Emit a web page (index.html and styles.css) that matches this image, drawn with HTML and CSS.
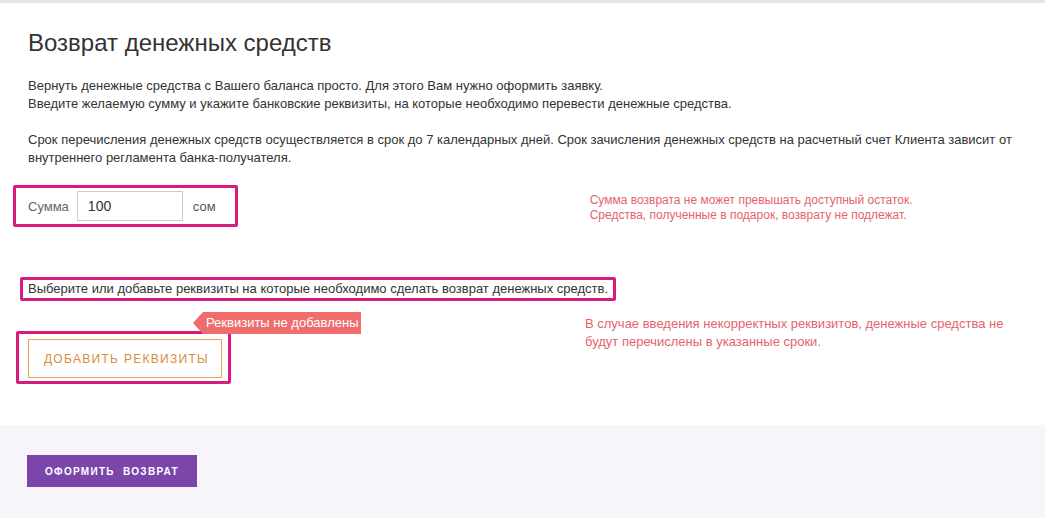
FILE: index.html
```html
<!DOCTYPE html>
<html>
<head>
  <title>Возврат денежных средств</title>
  <link rel="stylesheet" href="styles.css">
</head>
<body>
  <div class="topbar"></div>
  <div class="refund">
    <h1>Возврат денежных средств</h1>
    <p>Вернуть денежные средства с Вашего баланса просто. Для этого Вам нужно оформить заявку.<br>
      Введите желаемую сумму и укажите банковские реквизиты, на которые необходимо перевести денежные средства.</p>
    <p>Срок перечисления денежных средств осуществляется в срок до 7 календарных дней. Срок зачисления денежных средств на расчетный счет Клиента зависит от внутреннего регламента банка-получателя.</p>

    <div class="amount-row">
      <div class="mark amount">
        <label for="amount">Сумма</label>
        <input type="text" id="amount" value="100">
        <span class="currency">сом</span>
      </div>
      <div class="hint hint-amount">
        Сумма возврата не может превышать доступный остаток.<br>
        Средства, полученные в подарок, возврату не подлежат.
      </div>
    </div>

    <div class="mark choose">Выберите или добавьте реквизиты на которые необходимо сделать возврат денежных средств.</div>

    <div class="details-row">
      <div class="mark add-wrap">
        <span class="tip">Реквизиты не добавлены</span>
        <button type="button" class="btn-outline">Добавить реквизиты</button>
      </div>
      <div class="hint hint-details">
        В случае введения некорректных реквизитов, денежные средства не<br>
        будут перечислены в указанные сроки.
      </div>
    </div>
  </div>
  <div class="footer">
    <button type="button" class="btn-submit">Оформить&nbsp; возврат</button>
  </div>
</body>
</html>
```

FILE: styles.css
```css
body {
  margin: 0;
  font-family: "Liberation Sans", Arial, sans-serif;
  color: #333;
  background-color: #fff;
}

.topbar {
  height: 3px;
  background-color: #e6e6e6;
}

.refund {
  padding: 0 28px 41px 28px;
}

h1 {
  margin: 26px 0 20px 0;
  font-size: 24px;
  line-height: 28px;
  font-weight: normal;
  color: #333;
}

p {
  margin: 0 0 18px 0;
  font-size: 13px;
  line-height: 18px;
  color: #333;
}

.mark {
  border: 3px solid #d81b7f;
  border-radius: 2px;
}

.amount-row {
  display: flex;
  align-items: flex-start;
  margin-top: 17px;
}

.amount {
  display: flex;
  align-items: center;
  margin-left: -15px;
  padding: 3px 19px 3px 12px;
}

.amount label {
  font-size: 13px;
  color: #666;
}

.amount input {
  width: 106px;
  height: 30px;
  box-sizing: border-box;
  margin: 0 10px 0 8px;
  padding: 0 10px;
  border: 1px solid #ccc;
  font-family: inherit;
  font-size: 14px;
  color: #333;
}

.currency {
  font-size: 13px;
  color: #555;
}

.hint {
  color: #e5636d;
  white-space: nowrap;
}

.hint-amount {
  margin: 8px 0 0 352px;
  font-size: 12px;
  line-height: 15px;
}

.choose {
  display: inline-block;
  margin: 50px 0 0 -8px;
  padding: 0 5px;
  font-size: 13px;
  line-height: 18px;
}

.details-row {
  display: flex;
  align-items: flex-start;
  margin-top: 14px;
}

.add-wrap {
  position: relative;
  margin: 16px 0 0 -12px;
  padding: 5px 6px 3px 9px;
}

.tip {
  position: absolute;
  top: -22px;
  left: 184px;
  height: 22px;
  padding: 0 3px;
  background-color: #ef6d6d;
  color: #fff;
  font-size: 13px;
  line-height: 22px;
  white-space: nowrap;
}

.tip:before {
  content: "";
  position: absolute;
  left: -10px;
  top: 0;
  border-top: 11px solid transparent;
  border-bottom: 11px solid transparent;
  border-right: 10px solid #ef6d6d;
}

.btn-outline {
  display: block;
  width: 194px;
  height: 39px;
  padding: 0 0 0 3px;
  background-color: #fff;
  border: 1px solid #e9a352;
  color: #d98c3c;
  font-family: inherit;
  font-size: 12px;
  letter-spacing: 1.3px;
  text-transform: uppercase;
}

.hint-details {
  margin-left: 354px;
  font-size: 13px;
  line-height: 18px;
}

.footer {
  padding: 30px 27px 31px 27px;
  background-color: #f7f5fa;
}

.btn-submit {
  display: block;
  width: 170px;
  height: 32px;
  padding: 0;
  background-color: #7c45a9;
  border: none;
  color: #fff;
  font-family: inherit;
  font-size: 10px;
  font-weight: bold;
  letter-spacing: 1.3px;
  text-transform: uppercase;
}
```
